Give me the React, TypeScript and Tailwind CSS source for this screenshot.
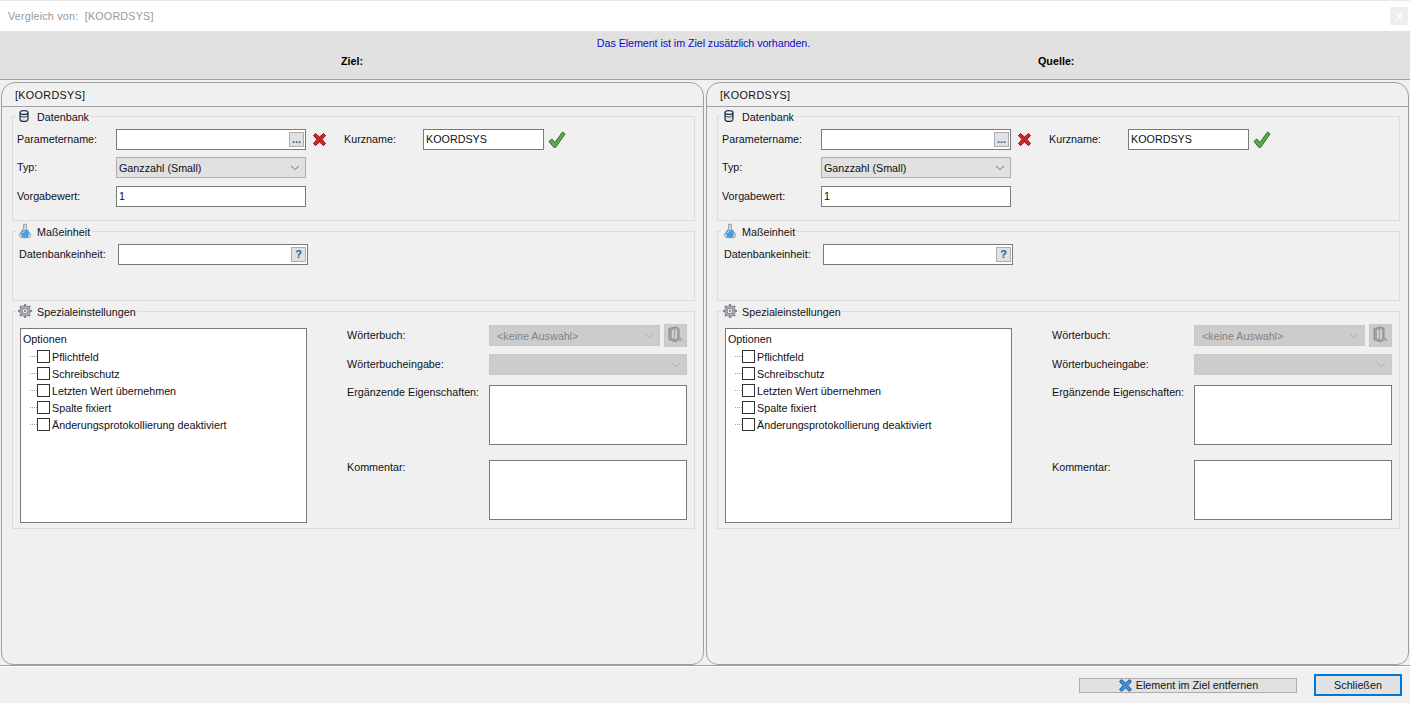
import type { ReactNode } from "react";
import { ChevronDown } from "lucide-react";

const DbIcon = () => (
  <svg width="14" height="14" viewBox="0 0 16 16" fill="none">
    <path d="M3.500 4v8c0 1.200 2 2.200 4.500 2.200s4.500-1 4.500-2.200V4" fill="#dfe7ee" stroke="#1c2b3a" strokeWidth="1.400" />
    <ellipse cx="8" cy="4" rx="4.500" ry="2.200" fill="#eef4fa" stroke="#1c2b3a" strokeWidth="1.400" />
    <path d="M3.500 7c0 1.200 2 2.200 4.500 2.200s4.500-1 4.500-2.200" stroke="#1c2b3a" strokeWidth="1" />
  </svg>
);

const FlaskIcon = () => (
  <svg width="16" height="16" viewBox="0 0 18 18" fill="none">
    <path d="M7 1.500h4M7.500 2v4L3 12.500C2 14.800 3.500 16.500 5.500 16.500h7c2 0 3.500-1.700 2.500-4L10.500 6V2" fill="#d8dfe6" stroke="#8a98a6" strokeWidth="1.100" />
    <circle cx="9" cy="12" r="4.400" fill="#4f9be0" />
    <path d="M6 11c.5-1 1.500-1.500 2.500-1.500" stroke="#cfe6fa" strokeWidth="1.200" />
  </svg>
);

const GearIcon = () => (
  <svg width="16" height="16" viewBox="0 0 18 18" fill="none">
    <circle cx="9" cy="9" r="6" fill="#b9bcc0" stroke="#777b80" strokeWidth="1" />
    <path
      d="M9 1v3M9 14v3M1 9h3M14 9h3M3.300 3.300l2.100 2.100M12.600 12.600l2.100 2.100M3.300 14.700l2.100-2.100M12.600 5.400l2.100-2.100"
      stroke="#85898e"
      strokeWidth="2.200"
    />
    <circle cx="9" cy="9" r="3.400" fill="#e6e7e8" stroke="#6c7075" strokeWidth="1" />
    <circle cx="9" cy="9" r="1.300" fill="#8a8e93" />
  </svg>
);

const CrossIcon = ({ fill, stroke }: { fill: string; stroke: string }) => (
  <svg width="15" height="15" viewBox="0 0 15 15">
    <path
      d="M1.500 3.500 3.500 1.500 7.500 5 11.500 1.500 13.500 3.500 10 7.500 13.500 11.500 11.500 13.500 7.500 10 3.500 13.500 1.500 11.500 5 7.500z"
      fill={fill}
      stroke={stroke}
      strokeWidth="1"
      strokeLinejoin="round"
    />
  </svg>
);

const CheckIcon = () => (
  <svg width="18" height="18" viewBox="0 0 18 18">
    <path
      d="M1 10.500 3.800 8 7 11.500 14.500 1 17 3 7.500 16.500h-1.500z"
      fill="#5cab45"
      stroke="#2f6b2a"
      strokeWidth="1"
      strokeLinejoin="round"
    />
  </svg>
);

const BookIcon = () => (
  <svg width="17" height="19" viewBox="0 0 17 19" fill="none">
    <path d="M2 2.500 9 1l3 1.500V11l-3 5-7-2.500z" fill="#a5a5a5" stroke="#8a8a8a" />
    <path d="M6 4v8M9 3.500V13" stroke="#dcdcdc" strokeWidth="1.500" />
    <path d="M12 12l3 3M14 12l-3 3" stroke="#a0a0a0" strokeWidth="1.500" />
  </svg>
);

function Group({
  icon,
  title,
  className,
  children,
}: {
  icon: ReactNode;
  title: string;
  className: string;
  children: ReactNode;
}) {
  return (
    <div className={`ml-[10px] mr-[8px] border border-[#dcdcdc] ${className}`}>
      <div className="-mt-[9px] ml-[3px] flex h-[16px] w-fit items-center bg-[#f0f0f0] pr-px">
        <span className="flex w-[21px] justify-start pl-px">{icon}</span>
        <span className="translate-y-px">{title}</span>
      </div>
      {children}
    </div>
  );
}

function Select({ value, disabled, className }: { value: string; disabled?: boolean; className: string }) {
  return (
    <div
      className={`flex h-[21px] items-center justify-between border pl-px pr-[3px] ${
        disabled ? "border-[#c8c8c8] bg-[#cccccc] text-[#838383]" : "border-[#adadad] bg-[#e1e1e1]"
      } ${className}`}
    >
      <span className={disabled ? "pl-[6px] pt-px" : "pl-[1px] pt-px"}>{value}</span>
      <ChevronDown size={14} strokeWidth={1.25} className={disabled ? "text-[#a2a2a2]" : "text-[#444444]"} />
    </div>
  );
}

const Input = ({ value, className, children }: { value?: string; className: string; children?: ReactNode }) => (
  <div className={`flex h-[21px] items-center border border-[#7a7a7a] bg-white pl-[2px] ${className}`}>
    {value}
    {children}
  </div>
);

const SmallBtn = ({ children }: { children: ReactNode }) => (
  <div className="flex h-[15px] w-[15px] items-center justify-center border border-[#adadad] bg-[#e1e1e1] text-[11px] font-bold leading-none text-[#2d5a8c]">
    {children}
  </div>
);

const options = [
  "Pflichtfeld",
  "Schreibschutz",
  "Letzten Wert übernehmen",
  "Spalte fixiert",
  "Änderungsprotokollierung deaktiviert",
];

function Panel() {
  return (
    <div className="h-[583px] w-[703px] rounded-t-[14px] rounded-b-[12px] border border-[#a0a0a0] bg-[#f0f0f0]">
      <div className="flex h-[24px] items-center border-b border-[#a0a0a0] pl-[13px] pt-px tracking-[0.35px]">[KOORDSYS]</div>

      <Group icon={<DbIcon />} title="Datenbank" className="mt-[9px] h-[105px]">
        <div className="mt-[5px] flex h-[21px] items-center pl-[4px]">
          <span className="w-[99px]">Parametername:</span>
          <Input className="w-[190px] justify-end pr-[1px]">
            <SmallBtn>...</SmallBtn>
          </Input>
          <span className="ml-[6px] w-[15px]">
            <CrossIcon fill="#d2232a" stroke="#7e1116" />
          </span>
          <span className="ml-[17px] w-[79px]">Kurzname:</span>
          <Input value="KOORDSYS" className="w-[121px]" />
          <span className="ml-[4px]">
            <CheckIcon />
          </span>
        </div>
        <div className="mt-[7px] flex h-[21px] items-center pl-[4px]">
          <span className="w-[99px]">Typ:</span>
          <Select value="Ganzzahl (Small)" className="w-[190px]" />
        </div>
        <div className="mt-[8px] flex h-[21px] items-center pl-[4px]">
          <span className="w-[99px]">Vorgabewert:</span>
          <Input value="1" className="w-[190px]" />
        </div>
      </Group>

      <Group icon={<FlaskIcon />} title="Maßeinheit" className="mt-[10px] h-[70px]">
        <div className="mt-[5px] flex h-[21px] items-center pl-[6px]">
          <span className="w-[99px]">Datenbankeinheit:</span>
          <Input className="w-[190px] justify-end pr-px">
            <SmallBtn>?</SmallBtn>
          </Input>
        </div>
      </Group>

      <Group icon={<GearIcon />} title="Spezialeinstellungen" className="mt-[10px] h-[218px]">
        <div className="mt-[9px] flex pl-[7px]">
          <div className="h-[195px] w-[287px] border border-[#7a7a7a] bg-white pl-[2px] pt-[2px]">
            <div className="h-[17px] leading-[17px]">Optionen</div>
            {options.map((o) => (
              <div key={o} className="flex h-[17px] items-center">
                <span className="ml-[7px] w-[7px] border-t border-dotted border-[#a0a0a0]" />
                <span className="h-[13px] w-[13px] border border-[#333333] bg-white" />
                <span className="ml-[2px] pt-px">{o}</span>
              </div>
            ))}
          </div>
          <div className="ml-[40px] w-[198px]">
            <div className="-mt-[4px] flex h-[23px] items-center">
              <span className="w-[142px] shrink-0">Wörterbuch:</span>
              <Select value="<keine Auswahl>" disabled className="w-[171px] shrink-0" />
              <div className="ml-[4px] flex h-[23px] w-[23px] shrink-0 items-center justify-center border border-[#c8c8c8] bg-[#cccccc]">
                <BookIcon />
              </div>
            </div>
            <div className="mt-[7px] flex h-[21px] items-center">
              <span className="w-[142px] shrink-0">Wörterbucheingabe:</span>
              <Select value="" disabled className="w-[198px] shrink-0" />
            </div>
            <div className="mt-[10px] flex">
              <span className="w-[142px] shrink-0 whitespace-nowrap">Ergänzende Eigenschaften:</span>
              <div className="h-[60px] w-[198px] shrink-0 border border-[#7a7a7a] bg-white" />
            </div>
            <div className="mt-[15px] flex">
              <span className="w-[142px] shrink-0">Kommentar:</span>
              <div className="h-[60px] w-[198px] shrink-0 border border-[#7a7a7a] bg-white" />
            </div>
          </div>
        </div>
      </Group>
    </div>
  );
}

export default function App() {
  return (
    <div className="h-[703px] w-[1410px] overflow-hidden bg-[#f0f0f0] font-['Liberation_Sans',sans-serif] text-[10.75px] leading-[15px] text-[#101018]">
      <div className="flex h-[31px] items-center justify-between border-t border-[#e8e8e8] bg-white pl-[8px] pr-[2px]">
        <span className="tracking-[0.2px] text-[#999999]">Vergleich von:&nbsp; [KOORDSYS]</span>
        <div className="flex h-[18px] w-[18px] items-center justify-center bg-[#eeeeee] text-[12px] font-bold text-white">x</div>
      </div>

      <div className="h-[49px] border-b border-[#a0a0a0] bg-[#e1e1e1]">
        <div className="pr-[3px] pt-[5px] text-center tracking-[-0.08px] text-[#0c0cc8]">Das Element ist im Ziel zusätzlich vorhanden.</div>
        <div className="mt-[3px] flex font-bold text-black">
          <span className="ml-[341px] w-[697px]">Ziel:</span>
          <span>Quelle:</span>
        </div>
      </div>

      <div className="flex gap-[2px] pl-px pt-[2px]">
        <Panel />
        <Panel />
      </div>

      <div className="h-[38px] border-t border-[#a0a0a0]">
        <div className="flex h-[37px] items-center justify-end gap-[17px] border-t border-white pr-[8px]">
          <div className="flex h-[15px] w-[218px] items-center justify-center gap-[3px] border border-[#adadad] bg-[#e1e1e1]">
            <CrossIcon fill="#3f8fd6" stroke="#1f5f9c" />
            <span>Element im Ziel entfernen</span>
          </div>
          <div className="flex h-[22px] w-[88px] items-center justify-center border-2 border-[#0078d7] bg-[#e1e1e1]">Schließen</div>
        </div>
      </div>
    </div>
  );
}
